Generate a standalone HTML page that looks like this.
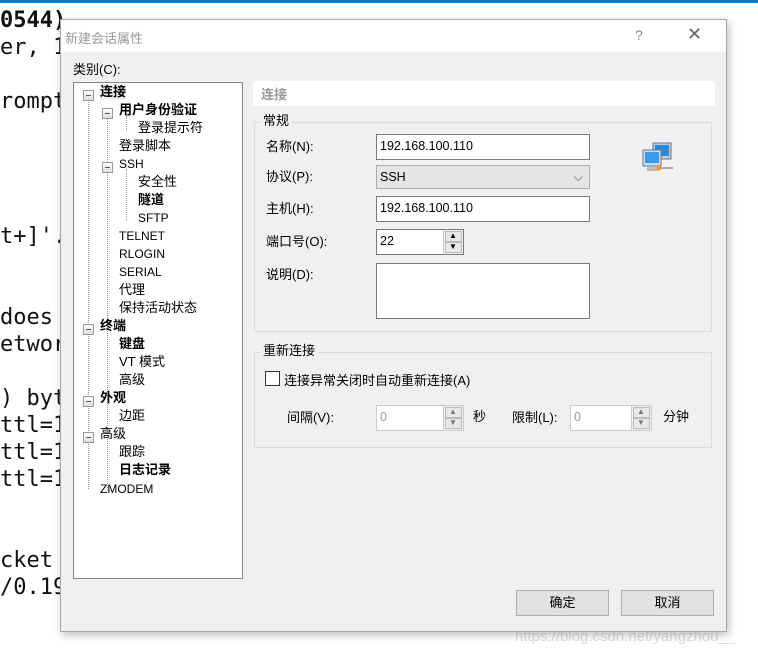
<!DOCTYPE html>
<html><head><meta charset="utf-8"><style>
*{box-sizing:border-box;margin:0;padding:0}
body{width:758px;height:655px;background:#fff;position:relative;overflow:hidden;font-family:"Liberation Sans","Noto Sans CJK SC",sans-serif;font-size:13px;color:#000}
.a{position:absolute}
.term{font-family:"DejaVu Sans Mono",monospace;font-size:22px;line-height:27px;white-space:pre;color:#111}
.dlg{left:60px;top:19px;width:667px;height:613px;background:#f0f0f0;border:1px solid #a8a8a8;box-shadow:2px 3px 8px rgba(0,0,0,.25)}
.tb{left:0;top:0;width:665px;height:32px;background:#fff}
.tree{left:12px;top:62px;width:170px;height:497px;background:#fff;border:1px solid #828790}
.ti{position:absolute;white-space:nowrap;line-height:16px;font-size:13px}
.b{font-weight:bold}
.exp{position:absolute;width:11px;height:11px;border:1px solid #999;background:linear-gradient(#fff,#ddd)}
.exp:after{content:"";position:absolute;left:2px;top:4px;width:5px;height:1px;background:#3a5a9a}
.in{background:#fff;border:1px solid #7a7a7a;padding-left:3px;line-height:23px;font-size:12.5px}
.grp{border:1px solid #dcdcdc}
.lg{background:#f0f0f0;padding:0 2px;font-size:13px;line-height:16px}
.btn{background:#e1e1e1;border:1px solid #adadad;text-align:center;line-height:23px;font-size:13px}
.sp{position:absolute;right:0;top:0;width:20px;height:100%;border-left:1px solid #ccc;background:#f0f0f0}
.sp i{position:absolute;left:1px;width:17px;height:11px;border:1px solid #bbb;background:#e8e8e8}
.sp b{position:absolute;left:5px;font-size:8px;line-height:10px;font-weight:normal}
.dot{position:absolute;border-left:1px dotted #999}
</style></head><body>
<div class="a" style="left:0;top:0;width:758px;height:3px;background:#0a78d4"></div>
<div class="a term" style="left:0;top:7px"><b>0544)</b>
er, 1

rompt




t+]'.


does
etwor

) byt
ttl=1
ttl=1
ttl=1


cket
/0.19</div>
<div class="a" style="left:515px;top:628px;font-size:15px;color:#ddd">https://blog.csdn.net/yangzhou__</div>

<div class="a dlg">
 <div class="a tb"></div>
 <div class="a" style="left:4px;top:8px;color:#999;font-size:13px">新建会话属性</div>
 <div class="a" style="left:574px;top:7px;color:#888;font-size:14px">?</div>
 <div class="a" style="left:626px;top:4px;color:#666;font-size:18px">✕</div>
 <div class="a" style="left:12px;top:39px">类别(C):</div>
 <div class="a tree">
  <div class="dot" style="left:14px;top:14px;height:392px"></div>
  <div class="dot" style="left:33px;top:32px;height:375px"></div>
  <div class="dot" style="left:52px;top:32px;height:16px"></div>
  <div class="dot" style="left:52px;top:86px;height:52px"></div>
  <div class="exp" style="left:9px;top:7px"></div><div class="ti b" style="left:26px;top:1px;background:#eee">连接</div>
  <div class="exp" style="left:28px;top:25px"></div><div class="ti b" style="left:45px;top:19px">用户身份验证</div>
  <div class="ti" style="left:64px;top:37px">登录提示符</div>
  <div class="ti" style="left:45px;top:55px">登录脚本</div>
  <div class="exp" style="left:28px;top:79px"></div><div class="ti" style="left:45px;top:73px;font-size:12px">SSH</div>
  <div class="ti" style="left:64px;top:91px">安全性</div>
  <div class="ti b" style="left:64px;top:109px">隧道</div>
  <div class="ti" style="left:64px;top:127px;font-size:12px">SFTP</div>
  <div class="ti" style="left:45px;top:145px;font-size:12px">TELNET</div>
  <div class="ti" style="left:45px;top:163px;font-size:12px">RLOGIN</div>
  <div class="ti" style="left:45px;top:181px;font-size:12px">SERIAL</div>
  <div class="ti" style="left:45px;top:199px">代理</div>
  <div class="ti" style="left:45px;top:217px">保持活动状态</div>
  <div class="exp" style="left:9px;top:241px"></div><div class="ti b" style="left:26px;top:235px">终端</div>
  <div class="ti b" style="left:45px;top:253px">键盘</div>
  <div class="ti" style="left:45px;top:271px">VT 模式</div>
  <div class="ti" style="left:45px;top:289px">高级</div>
  <div class="exp" style="left:9px;top:313px"></div><div class="ti b" style="left:26px;top:307px">外观</div>
  <div class="ti" style="left:45px;top:325px">边距</div>
  <div class="exp" style="left:9px;top:349px"></div><div class="ti" style="left:26px;top:343px">高级</div>
  <div class="ti" style="left:45px;top:361px">跟踪</div>
  <div class="ti b" style="left:45px;top:379px">日志记录</div>
  <div class="ti" style="left:26px;top:398px;font-size:12px">ZMODEM</div>
 </div>
 <div class="a" style="left:192px;top:61px;width:462px;height:25px;background:#fff;color:#999;font-weight:bold;padding:3px 0 0 8px">连接</div>
 <div class="a grp" style="left:193px;top:102px;width:458px;height:210px"></div>
 <div class="a lg" style="left:200px;top:93px">常规</div>
 <div class="a" style="left:205px;top:116px">名称(N):</div>
 <div class="a" style="left:205px;top:146px">协议(P):</div>
 <div class="a" style="left:205px;top:178px">主机(H):</div>
 <div class="a" style="left:205px;top:211px">端口号(O):</div>
 <div class="a" style="left:205px;top:244px">说明(D):</div>
 <div class="a in" style="left:315px;top:114px;width:214px;height:26px">192.168.100.110</div>
 <div class="a in" style="left:315px;top:145px;width:214px;height:24px;background:#e5e5e5;border-color:#adadad">SSH<span style="position:absolute;right:6px;top:0;color:#555">⌵</span></div>
 <div class="a in" style="left:315px;top:176px;width:214px;height:26px">192.168.100.110</div>
 <div class="a in" style="left:315px;top:209px;width:88px;height:26px">22<div class="sp"><i style="top:1px"></i><i style="top:12px"></i><b style="top:1px">▲</b><b style="top:12px">▼</b></div></div>
 <div class="a in" style="left:315px;top:243px;width:214px;height:56px"></div>
 <svg class="a" style="left:580px;top:121px" width="34" height="34" viewBox="0 0 34 34">
  <rect x="12" y="2" width="18" height="16" fill="#bcd" stroke="#678"/><rect x="14" y="4" width="14" height="11" fill="#2a8ad8"/>
  <rect x="2" y="9" width="18" height="16" fill="#cde" stroke="#678"/><rect x="4" y="11" width="14" height="11" fill="#3a9ae8"/>
  <rect x="6" y="26" width="12" height="4" fill="#bbb"/><rect x="20" y="26" width="12" height="2" fill="#aaa"/><rect x="16" y="25" width="4" height="4" fill="#f90"/>
 </svg>
 <div class="a grp" style="left:193px;top:332px;width:458px;height:96px"></div>
 <div class="a lg" style="left:200px;top:323px">重新连接</div>
 <div class="a" style="left:204px;top:351px;width:15px;height:15px;border:1px solid #333;background:#fff"></div>
 <div class="a" style="left:223px;top:350px">连接异常关闭时自动重新连接(A)</div>
 <div class="a" style="left:226px;top:387px">间隔(V):</div>
 <div class="a in" style="left:315px;top:385px;width:88px;height:26px;color:#999;border-color:#ccc">0<div class="sp"><i style="top:1px"></i><i style="top:12px"></i><b style="top:1px;color:#777">▲</b><b style="top:12px;color:#777">▼</b></div></div>
 <div class="a" style="left:412px;top:386px">秒</div>
 <div class="a" style="left:451px;top:387px">限制(L):</div>
 <div class="a in" style="left:509px;top:385px;width:82px;height:26px;color:#999;border-color:#ccc">0<div class="sp"><i style="top:1px"></i><i style="top:12px"></i><b style="top:1px;color:#777">▲</b><b style="top:12px;color:#777">▼</b></div></div>
 <div class="a" style="left:602px;top:386px">分钟</div>
 <div class="a btn" style="left:455px;top:570px;width:93px;height:26px">确定</div>
 <div class="a btn" style="left:560px;top:570px;width:93px;height:26px">取消</div>
</div>
</body></html>
